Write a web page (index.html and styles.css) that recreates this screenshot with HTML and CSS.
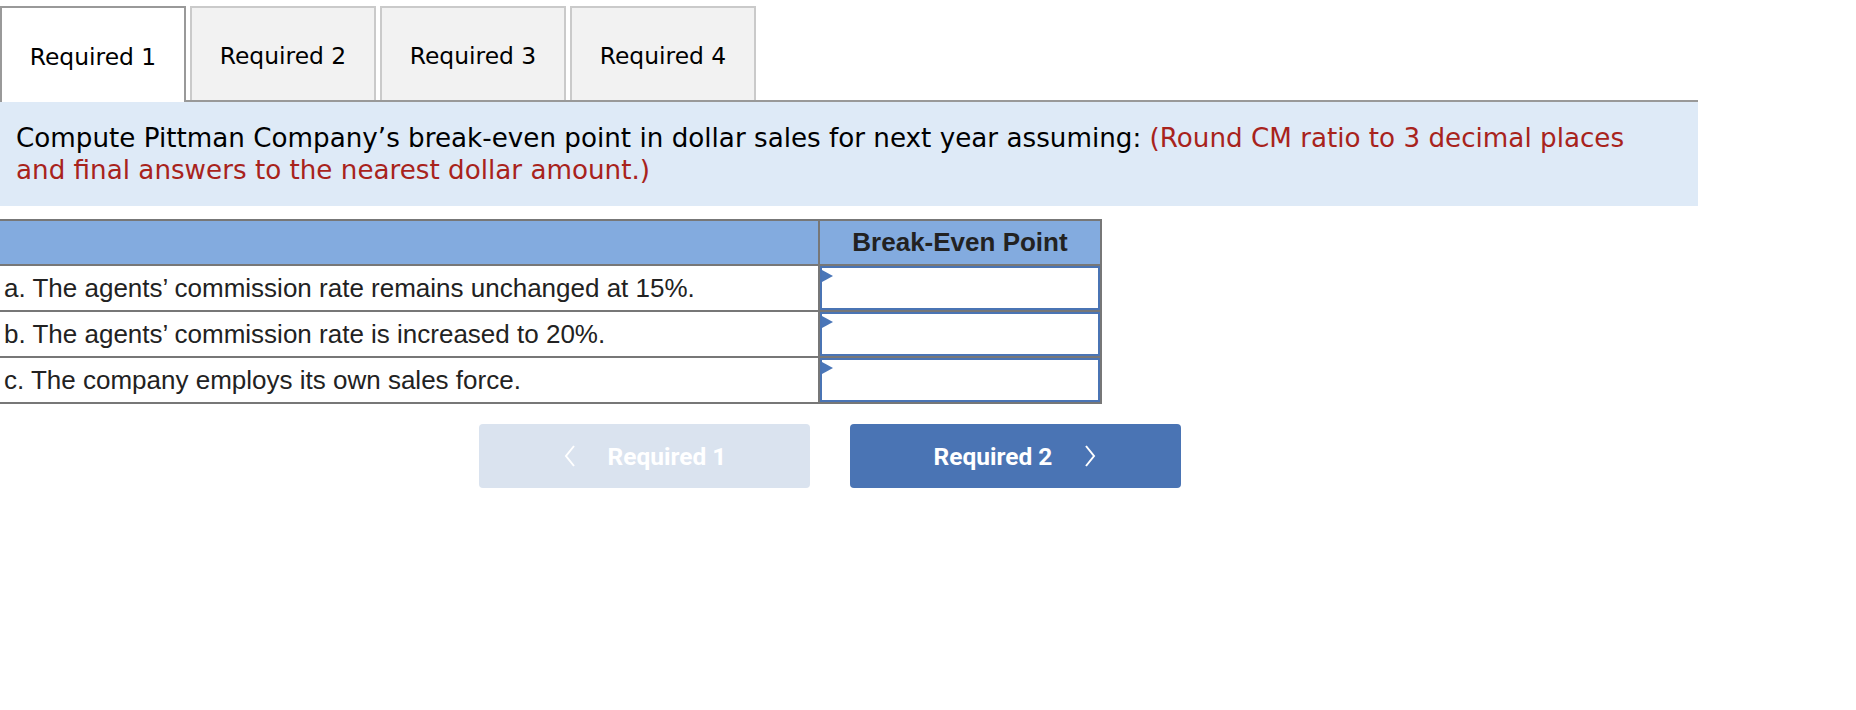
FILE: index.html
```html
<!DOCTYPE html>
<html lang="en">
<head>
<meta charset="utf-8">
<title>Required 1</title>
<link rel="stylesheet" href="styles.css">
</head>
<body>
<div class="page">
  <div class="tabs">
    <div class="tab active">Required 1</div>
    <div class="tab">Required 2</div>
    <div class="tab">Required 3</div>
    <div class="tab">Required 4</div>
  </div>

  <div class="prompt">
    <p>Compute Pittman Company’s break-even point in dollar sales for next year assuming: <span class="note">(Round CM ratio to 3 decimal places<br>and final answers to the nearest dollar amount.)</span></p>
  </div>

  <table class="grid">
    <thead>
      <tr>
        <th class="label-col"></th>
        <th class="value-col">Break-Even Point</th>
      </tr>
    </thead>
    <tbody>
      <tr>
        <td class="label-col">a. The agents’ commission rate remains unchanged at 15%.</td>
        <td class="value-col"><div class="input"><span class="flag"></span></div></td>
      </tr>
      <tr>
        <td class="label-col">b. The agents’ commission rate is increased to 20%.</td>
        <td class="value-col"><div class="input"><span class="flag"></span></div></td>
      </tr>
      <tr>
        <td class="label-col">c. The company employs its own sales force.</td>
        <td class="value-col"><div class="input"><span class="flag"></span></div></td>
      </tr>
    </tbody>
  </table>

  <div class="nav">
    <div class="btn btn-prev">
      <svg class="chev" width="14" height="24" viewBox="0 0 14 24"><polyline points="11,2 3,12 11,22" fill="none" stroke="#fff" stroke-width="2"/></svg>
      <span>Required 1</span>
    </div>
    <div class="btn btn-next">
      <span>Required 2</span>
      <svg class="chev" width="14" height="24" viewBox="0 0 14 24"><polyline points="3,2 11,12 3,22" fill="none" stroke="#fff" stroke-width="2"/></svg>
    </div>
  </div>
</div>
</body>
</html>
```

FILE: styles.css
```css
html, body {
  margin: 0;
  padding: 0;
  background: #fff;
}

.page {
  padding-top: 6px;
}

.tabs {
  display: flex;
  align-items: flex-start;
  width: 1698px;
  height: 94px;
  border-bottom: 2px solid #999;
}

.tab {
  box-sizing: border-box;
  width: 186px;
  height: 94px;
  margin-right: 4px;
  background: #f2f2f2;
  border: 2px solid #cacaca;
  border-bottom: none;
  display: flex;
  align-items: center;
  justify-content: center;
  padding-top: 4px;
  font-family: "DejaVu Sans", Verdana, sans-serif;
  font-size: 23.4px;
  color: #000;
}

.tab.active {
  height: 96px;
  background: #fff;
  border-color: #999;
  position: relative;
  z-index: 1;
}

.prompt {
  box-sizing: border-box;
  width: 1698px;
  height: 104px;
  background: #deeaf7;
  padding: 20px 16px 0 16px;
}

.prompt p {
  margin: 0;
  font-family: "DejaVu Sans", Verdana, sans-serif;
  font-size: 26.2px;
  line-height: 32px;
  color: #000;
}

.note {
  color: #a8231c;
}

.grid {
  margin-top: 13px;
  border-collapse: separate;
  border-spacing: 0;
  font-family: "Liberation Sans", Arial, sans-serif;
  font-size: 26px;
  color: #222;
}

.grid th {
  height: 47px;
  padding: 0;
  background: #83abdf;
  border-top: 2px solid #777;
  border-bottom: 2px solid #777;
  font-weight: bold;
  text-align: center;
}

.grid td {
  height: 46px;
  padding: 0;
  border-bottom: 2px solid #777;
}

.label-col {
  box-sizing: border-box;
  width: 820px;
  border-right: 2px solid #777;
  text-align: left;
}

.grid td.label-col {
  padding-left: 4px;
}

.value-col {
  box-sizing: border-box;
  width: 282px;
  border-right: 2px solid #777;
}

.input {
  position: relative;
  box-sizing: border-box;
  height: 44px;
  border: 2px solid #4a74b4;
  background: #fff;
}

.flag {
  position: absolute;
  left: 0;
  top: 2px;
  width: 0;
  height: 0;
  border-top: 6px solid transparent;
  border-bottom: 6px solid transparent;
  border-left: 11px solid #4a76b8;
}

.nav {
  display: flex;
  gap: 40px;
  margin-top: 20px;
  margin-left: 479px;
}

.btn {
  box-sizing: border-box;
  width: 331px;
  height: 64px;
  border-radius: 4px;
  display: flex;
  align-items: center;
  justify-content: center;
  gap: 31px;
  font-family: Roboto, "Liberation Sans", sans-serif;
  font-weight: bold;
  font-size: 24.5px;
  color: #fff;
}

.btn-prev {
  background: #dae3ef;
}

.btn-next {
  background: #4a74b4;
}

.chev {
  display: block;
}
```
